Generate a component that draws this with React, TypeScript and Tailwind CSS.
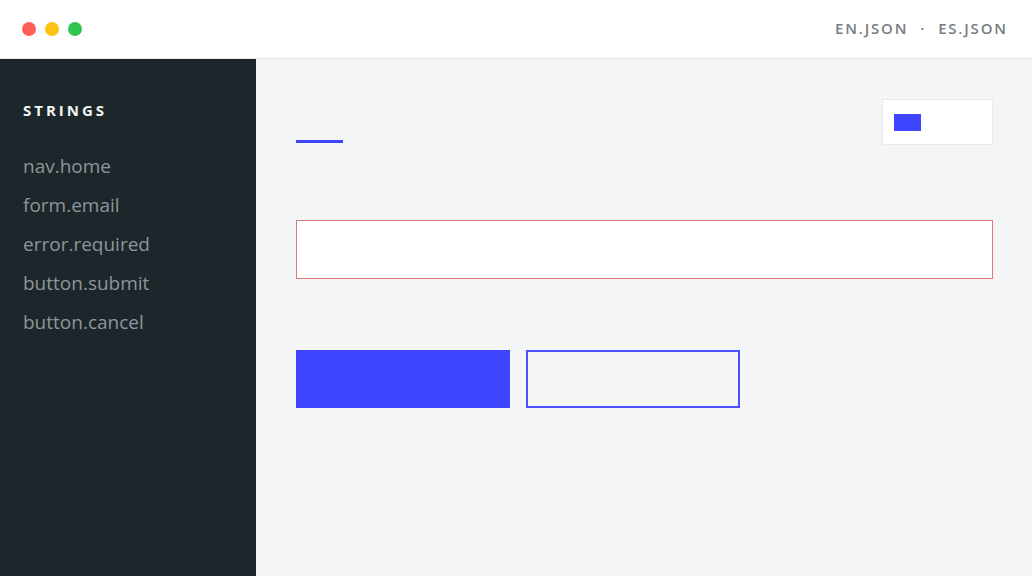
const keys = ["nav.home", "form.email", "error.required", "button.submit", "button.cancel"];

export default function App() {
  return (
    <div className="flex h-screen w-full flex-col overflow-hidden bg-[#f4f5f7] font-['Open_Sans',sans-serif]">
      {/* Title bar */}
      <header className="flex h-[59px] shrink-0 items-center justify-between border-b border-[#e6e8eb] bg-white pl-[22px] pr-[26px]">
        <div className="flex items-center gap-[9px]">
          <span className="h-3.5 w-3.5 rounded-full bg-[#ff5f57]" />
          <span className="h-3.5 w-3.5 rounded-full bg-[#fec312]" />
          <span className="h-3.5 w-3.5 rounded-full bg-[#2fc652]" />
        </div>
        <div className="-mt-0.5 flex items-center gap-3 text-[15px] font-semibold uppercase tracking-[0.12em] text-[#777c80]">
          <span>en.json</span>
          <span>·</span>
          <span className="-mr-[0.12em]">es.json</span>
        </div>
      </header>

      <div className="flex min-h-0 flex-1">
        {/* Sidebar */}
        <aside className="w-64 shrink-0 bg-[#1d262b] pl-[23px] pt-[41px]">
          <h2 className="text-[15px] font-bold uppercase leading-5 tracking-[0.2em] text-[#f2f4f5]">Strings</h2>
          <ul className="mt-[27px]">
            {keys.map((k) => (
              <li key={k} className="text-[19px] leading-[39px] text-[#8d959a]">
                {k}
              </li>
            ))}
          </ul>
        </aside>

        {/* Main preview */}
        <main className="flex-1 pl-10 pr-[39px] pt-10">
          <div className="flex items-start justify-between">
            <div className="mt-[41px] h-[3px] w-[47px] bg-[#3d46fe]" />
            <div className="flex h-[46px] w-[111px] items-center border border-[#e8eaed] bg-white px-[11px]">
              <div className="h-[17px] w-[27px] bg-[#3d46fe]" />
            </div>
          </div>

          <div className="mt-[75px] h-[59px] w-full border border-[#dc7a7a] bg-white" />

          <div className="mt-[71px] flex gap-4">
            <div className="h-[58px] w-[214px] bg-[#3d46fe]" />
            <div className="h-[58px] w-[214px] border-2 border-[#4b52fb]" />
          </div>
        </main>
      </div>
    </div>
  );
}
